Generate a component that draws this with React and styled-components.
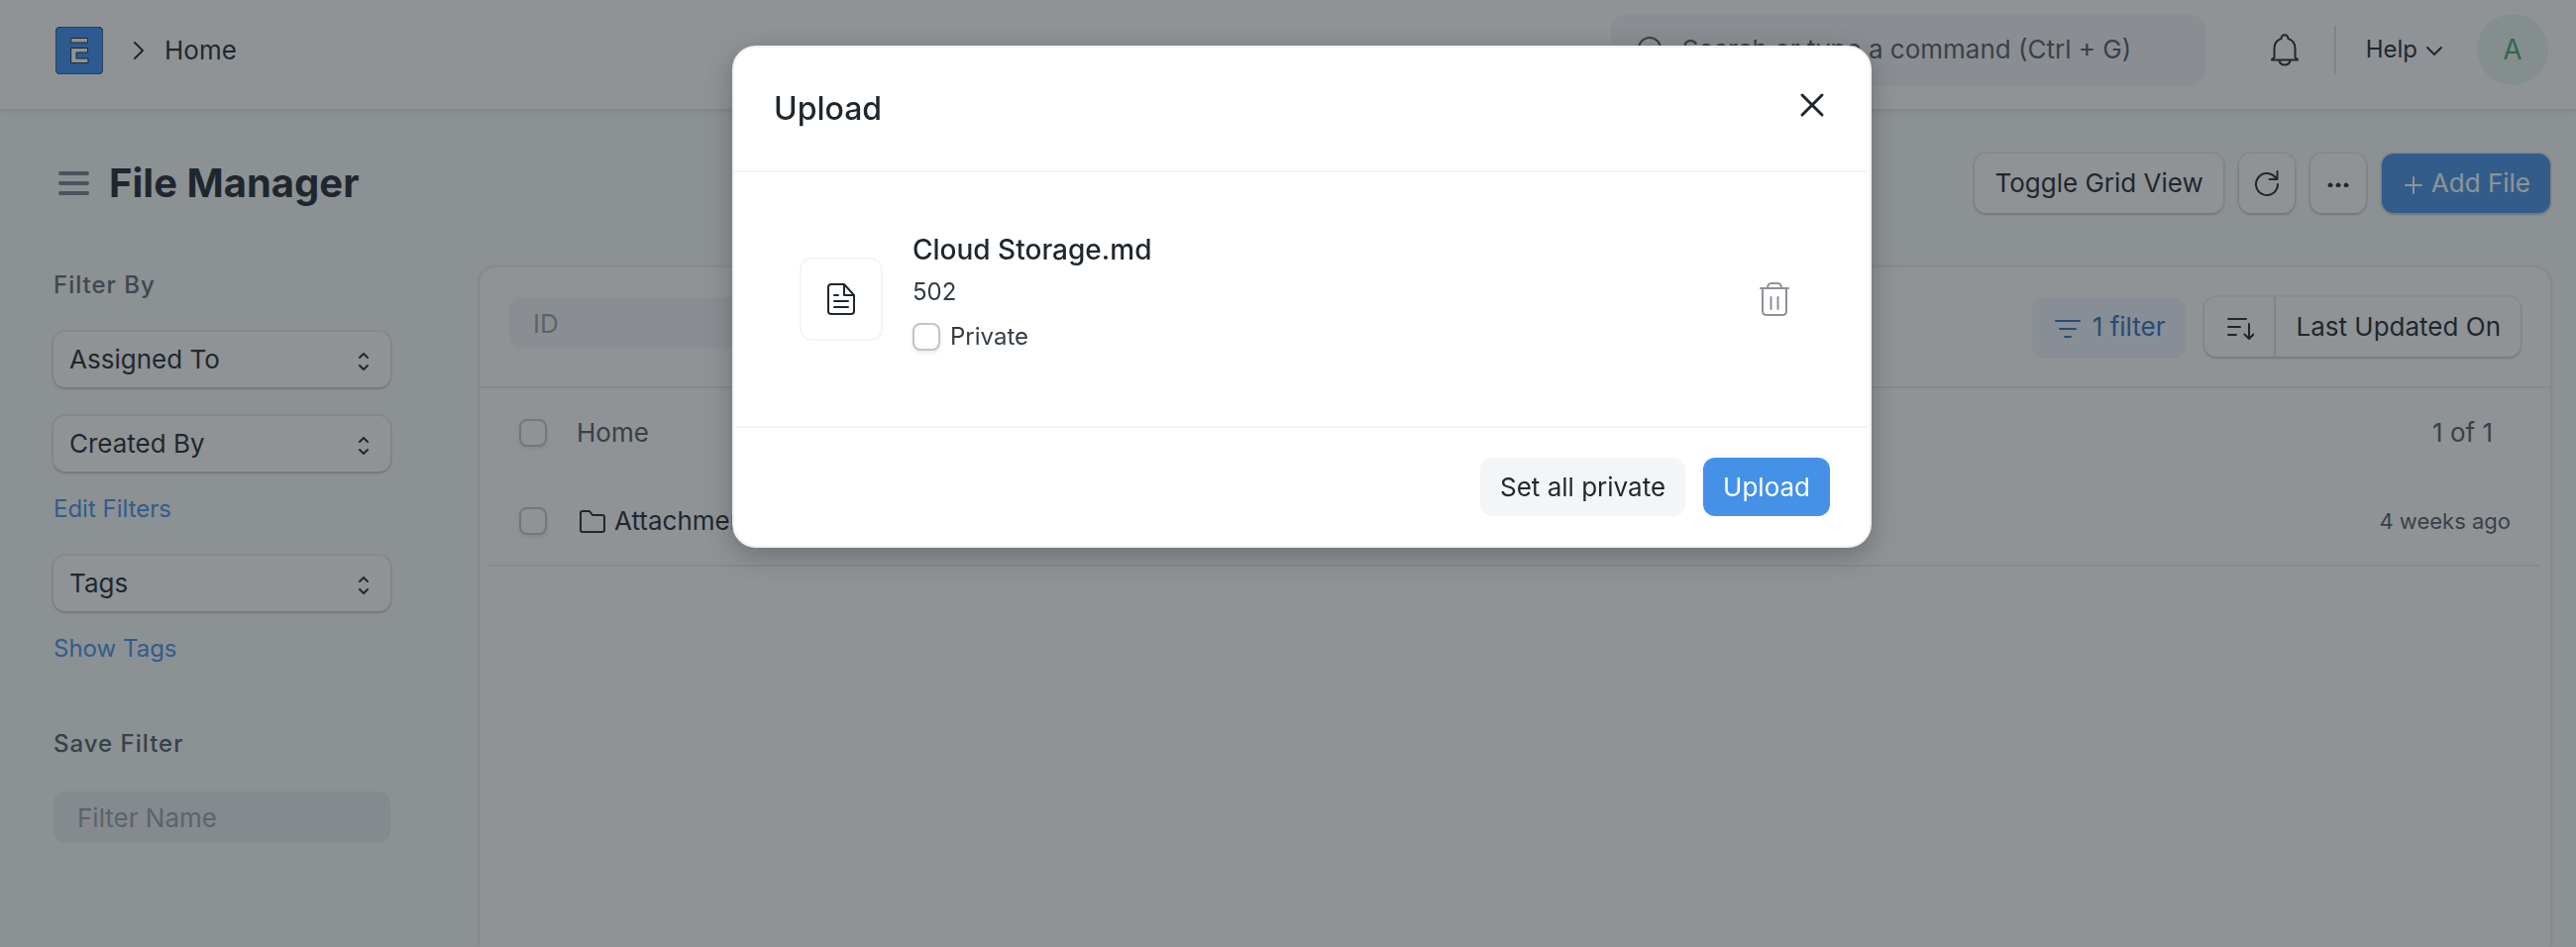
import React from "react";
import styled, { createGlobalStyle, css } from "styled-components";

const GlobalStyle = createGlobalStyle`
  * { box-sizing: border-box; }
  html, body, #root { height: 100%; }
  body {
    margin: 0;
    background: #f9fafa;
    color: #1f272e;
    font: 26px/40px Inter, sans-serif;
    overflow: hidden;
  }
  button, input, select { font: inherit; color: inherit; margin: 0; }
  h1, h2, h3, p { margin: 0; }
  svg { display: block; flex: none; fill: none; stroke: currentColor; stroke-linecap: round; stroke-linejoin: round; }
`;

const raised = css`
  border: 0;
  border-radius: 12px;
  background: #fff;
  box-shadow: 0 0 0 2px rgba(0, 0, 0, 0.06), 0 2px 3px rgba(25, 39, 52, 0.18);
`;

const Page = styled.div`
  height: 100%;
  display: flex;
  flex-direction: column;
  overflow: hidden;
`;

const Navbar = styled.header`
  height: 110px;
  flex: none;
  display: flex;
  align-items: flex-start;
  justify-content: space-between;
  padding: 14px 28px 0 56px;
  background: #fff;
  box-shadow: 0 2px 0 #e4e7ea, 0 4px 4px rgba(25, 39, 52, 0.06);
`;

const Breadcrumb = styled.nav`
  height: 74px;
  display: flex;
  align-items: center;
  a { color: inherit; text-decoration: none; }
  > svg { margin: 0 18px 0 28px; }
`;

const NavTools = styled.div`
  display: flex;
  align-items: center;
`;

const Search = styled.label`
  width: 600px;
  height: 72px;
  display: flex;
  align-items: center;
  gap: 18px;
  padding: 0 26px;
  margin-right: 60px;
  border-radius: 16px;
  background: #f4f5f6;
  color: #505a62;
  input {
    flex: 1;
    min-width: 0;
    border: 0;
    padding: 0;
    background: none;
    &::placeholder { color: #505a62; opacity: 1; }
  }
`;

const PlainButton = styled.button`
  border: 0;
  padding: 0;
  background: none;
  display: flex;
  align-items: center;
  gap: ${(p) => p.$gap || 0}px;
  font-size: 24px;
  color: ${(p) => p.$color || "#1f272e"};
`;

const NavDivider = styled.span`
  width: 2px;
  height: 48px;
  margin: 0 30px;
  background: #dce0e3;
`;

const Avatar = styled.span`
  width: 72px;
  height: 72px;
  margin-left: 34px;
  display: grid;
  place-items: center;
  border-radius: 50%;
  background: #eaf5ee;
  color: #48a868;
  font-size: 28px;
`;

const PageHead = styled.div`
  flex: none;
  display: flex;
  align-items: center;
  justify-content: space-between;
  padding: 45px 26px 0 58px;
`;

const TitleArea = styled.div`
  display: flex;
  align-items: center;
  gap: 20px;
  h1 { font-size: 40px; line-height: 60px; font-weight: 700; }
`;

const Actions = styled.div`
  display: flex;
  gap: 16px;
`;

const Button = styled.button`
  ${raised}
  height: ${(p) => p.$height || 60}px;
  min-width: 56px;
  padding: 0 ${(p) => (p.$icon ? 0 : 20)}px;
  display: flex;
  align-items: center;
  justify-content: center;
  gap: 6px;
  white-space: nowrap;
  ${(p) => p.$primary && css`background: #4491e7; color: #fff;`}
  ${(p) => p.$flat && css`box-shadow: none;`}
  ${(p) => p.$muted && css`background: #f4f5f6;`}
`;

const Body = styled.div`
  flex: 1;
  min-height: 0;
  display: flex;
  gap: 90px;
  padding: 55px 26px 0 54px;
`;

const Sidebar = styled.aside`
  width: 340px;
  flex: none;
  display: flex;
  flex-direction: column;
`;

const SideHeading = styled.h3`
  margin-top: ${(p) => p.$top || 0}px;
  font-size: 24px;
  line-height: 36px;
  font-weight: 500;
  letter-spacing: 1px;
  color: ${(p) => (p.$strong ? "#4c5a67" : "#5f6970")};
`;

const SelectWrap = styled.label`
  position: relative;
  display: block;
  margin-top: 29px;
  select {
    ${raised}
    appearance: none;
    display: block;
    width: 100%;
    height: 56px;
    padding: 0 16px;
  }
  svg { position: absolute; right: 22px; top: 20px; pointer-events: none; }
`;

const SideLink = styled.a`
  margin-top: 20px;
  font-size: 24px;
  line-height: 36px;
  color: #4491e7;
  text-decoration: none;
`;

const TextField = styled.input`
  width: ${(p) => p.$width || "100%"};
  height: 52px;
  margin-top: ${(p) => p.$top || 0}px;
  padding: 0 24px;
  border: 0;
  border-radius: 12px;
  background: ${(p) => p.$bg};
  &::placeholder { color: #98a1a9; opacity: 1; }
`;

const Card = styled.main`
  flex: 1;
  min-width: 0;
  background: #fff;
  border-radius: 16px 16px 0 0;
  box-shadow: 0 0 4px rgba(25, 39, 52, 0.2);
`;

const FilterBar = styled.div`
  height: 122px;
  display: flex;
  align-items: flex-start;
  justify-content: space-between;
  padding: 30px 30px 0;
  border-bottom: 2px solid #ebeef0;
`;

const FilterTools = styled.div`
  display: flex;
  gap: 20px;
`;

const FilterButton = styled.button`
  height: 60px;
  padding: 0 20px;
  display: flex;
  align-items: center;
  gap: 10px;
  border: 0;
  border-radius: 12px;
  background: #eff4fd;
  color: #2c70b8;
  box-shadow: 0 1px 2px rgba(25, 39, 52, 0.12);
`;

const SortGroup = styled.div`
  ${raised}
  height: 60px;
  display: flex;
  button {
    border: 0;
    background: none;
    padding: 0 20px;
    display: flex;
    align-items: center;
    & + button { border-left: 2px solid #dce0e3; }
  }
`;

const Row = styled.div`
  height: 90px;
  display: flex;
  align-items: center;
  margin: 0 10px;
  padding: 0 ${(p) => p.$right}px 0 30px;
  ${(p) => p.$line && css`border-bottom: 2px solid #ebeef0;`}
  color: ${(p) => (p.$line ? "#1f272e" : "#505a62")};
`;

const Checkbox = styled.input.attrs({ type: "checkbox" })`
  appearance: none;
  flex: none;
  width: 28px;
  height: 28px;
  border: 2px solid #c0c6cc;
  border-radius: 8px;
  background: #fff;
  box-shadow: 0 2px 4px rgba(0, 0, 0, 0.1);
`;

const RowName = styled.span`
  flex: 1;
  display: flex;
  align-items: center;
  gap: 8px;
  margin-left: 30px;
`;

const RowMeta = styled.span`
  font-size: ${(p) => p.$size}px;
  color: #505a62;
`;

const Backdrop = styled.div`
  position: fixed;
  inset: 0;
  display: flex;
  align-items: flex-start;
  justify-content: center;
  padding: 46px 0 46px 28px;
  background: rgba(31, 39, 46, 0.5);
`;

const Dialog = styled.section`
  width: 1150px;
  max-width: 100%;
  background: #fff;
  border: 2px solid #f0f1f2;
  border-radius: 24px;
  box-shadow: 0 8px 28px rgba(0, 0, 0, 0.24);
`;

const DialogHead = styled.header`
  height: 124px;
  display: flex;
  align-items: center;
  justify-content: space-between;
  padding: 0 40px;
  h2 { font-size: 32px; line-height: 48px; font-weight: 500; }
`;

const DialogBody = styled.div`
  min-height: 260px;
  display: flex;
  align-items: center;
  padding: 0 80px 0 66px;
  border-top: 2px solid #f4f5f6;
  border-bottom: 2px solid #f4f5f6;
`;

const FileTile = styled.div`
  width: 84px;
  height: 84px;
  flex: none;
  display: grid;
  place-items: center;
  border: 2px solid #f4f5f6;
  border-radius: 12px;
`;

const FileInfo = styled.div`
  flex: 1;
  margin-left: 30px;
  padding-bottom: 10px;
  font-size: 24px;
  line-height: 42px;
  color: #333c44;
  h3 { font-size: 28px; line-height: 44px; font-weight: 500; color: #1f272e; }
  label { display: flex; align-items: center; gap: 10px; line-height: 48px; }
`;

const DialogFoot = styled.footer`
  display: flex;
  justify-content: flex-end;
  gap: 18px;
  padding: 30px 40px;
`;

const Logo = () => (
  <svg width="48" height="48" viewBox="0 0 48 48" stroke="none">
    <rect width="48" height="48" rx="5" fill="#3b8ff5" />
    <path d="M16 11.5h16.5V16H16zM16 21.5h16.5V26H21v6h12v4.5H16z" fill="#fff" />
  </svg>
);

const Updown = () => (
  <svg width="10" height="20" viewBox="0 0 10 20" strokeWidth="2">
    <path d="M1 6l4-4 4 4M1 14l4 4 4-4" />
  </svg>
);

const SelectBox = ({ label }) => (
  <SelectWrap>
    <select aria-label={label}>
      <option>{label}</option>
    </select>
    <Updown />
  </SelectWrap>
);

export default function App() {
  return (
    <>
      <GlobalStyle />
      <Page>
        <Navbar>
          <Breadcrumb>
            <a href="#desk" aria-label="Desk"><Logo /></a>
            <svg width="16" height="20" viewBox="0 0 16 20" strokeWidth="2"><path d="M4 2l8 8-8 8" /></svg>
            <a href="#home">Home</a>
          </Breadcrumb>
          <NavTools>
            <Search>
              <svg width="28" height="28" viewBox="0 0 28 28" strokeWidth="2"><circle cx="13" cy="13" r="11" /><path d="M21 21l5 5" /></svg>
              <input placeholder="Search or type a command (Ctrl + G)" />
            </Search>
            <PlainButton aria-label="Notifications">
              <svg width="40" height="40" viewBox="0 0 40 40" strokeWidth="2">
                <path d="M7 30.5h26M7 30l2.500-2v-9c0-6 2.500-8.500 7-10 .5-5 6.500-5 7 0 4.500 1.500 7 4 7 10v9l2.500 2M14.500 31c1 6 10 6 11 0" />
              </svg>
            </PlainButton>
            <NavDivider />
            <PlainButton $gap={8}>
              Help
              <svg width="18" height="16" viewBox="0 0 18 16" strokeWidth="2"><path d="M2 6l7 7 7-7" /></svg>
            </PlainButton>
            <Avatar>A</Avatar>
          </NavTools>
        </Navbar>

        <PageHead>
          <TitleArea>
            <PlainButton aria-label="Toggle sidebar" $color="#74808b">
              <svg width="32" height="28" viewBox="0 0 32 28" strokeWidth="4"><path d="M3 4h27M3 14h27M3 24h27" /></svg>
            </PlainButton>
            <h1>File Manager</h1>
          </TitleArea>
          <Actions>
            <Button>Toggle Grid View</Button>
            <Button $icon aria-label="Refresh">
              <svg width="28" height="28" viewBox="0 0 28 28" strokeWidth="2"><path d="M25 15A11 11 0 1 1 22 7.500l2.500 2.500M24.500 2v8h-8" /></svg>
            </Button>
            <Button $icon aria-label="More">
              <svg width="22" height="8" viewBox="0 0 22 8" stroke="none"><g fill="#1f272e"><circle cx="3" cy="6" r="2" /><circle cx="11" cy="6" r="2" /><circle cx="19" cy="6" r="2" /></g></svg>
            </Button>
            <Button $primary>
              <svg width="24" height="24" viewBox="0 0 24 24" strokeWidth="2"><path d="M12 6v16M4 14h16" /></svg>
              Add File
            </Button>
          </Actions>
        </PageHead>

        <Body>
          <Sidebar>
            <SideHeading>Filter By</SideHeading>
            <SelectBox label="Assigned To" />
            <SelectBox label="Created By" />
            <SideLink href="#filters">Edit Filters</SideLink>
            <SelectBox label="Tags" />
            <SideLink href="#tags">Show Tags</SideLink>
            <SideHeading $strong $top={60}>Save Filter</SideHeading>
            <TextField placeholder="Filter Name" aria-label="Filter Name" $bg="#ebecf1" $top={30} />
          </Sidebar>
          <Card>
            <FilterBar>
              <TextField placeholder="ID" aria-label="ID" $width="320px" $bg="#f4f5f6" />
              <FilterTools>
                <FilterButton>
                  <svg width="30" height="28" viewBox="0 0 30 28" strokeWidth="2"><path d="M3 8h24M7 16h16M12 24h6" /></svg>
                  1 filter
                </FilterButton>
                <SortGroup>
                  <button aria-label="Sort direction">
                    <svg width="30" height="28" viewBox="0 0 30 28" strokeWidth="2"><path d="M4 6h18M4 14h12M4 22h8M25 11v15M20.500 21.500L25 26l4.500-4.500" /></svg>
                  </button>
                  <button>Last Updated On</button>
                </SortGroup>
              </FilterTools>
            </FilterBar>
            <Row $right={48}>
              <Checkbox aria-label="Select all" />
              <RowName>Home</RowName>
              <RowMeta $size={26}>1 of 1</RowMeta>
            </Row>
            <Row $right={30} $line>
              <Checkbox aria-label="Select Attachments" />
              <RowName>
                <svg width="30" height="28" viewBox="0 0 30 28" strokeWidth="2"><path d="M4 6q0-2 2-2h7l3 4h10q2 0 2 2v13q0 2-2 2H6q-2 0-2-2z" /></svg>
                Attachments
              </RowName>
              <RowMeta $size={22}>4 weeks ago</RowMeta>
            </Row>
          </Card>
        </Body>
      </Page>

      <Backdrop>
        <Dialog role="dialog" aria-label="Upload">
          <DialogHead>
            <h2>Upload</h2>
            <PlainButton aria-label="Close">
              <svg width="36" height="36" viewBox="0 0 36 36" strokeWidth="3"><path d="M8 4l20 20M28 4L8 24" /></svg>
            </PlainButton>
          </DialogHead>
          <DialogBody>
            <FileTile>
              <svg width="32" height="36" viewBox="0 0 32 36" strokeWidth="2"><path d="M19 3H6q-3 0-3 3v24q0 3 3 3h20q3 0 3-3V14zM19 3v11h10M9 14h4M9 20h14M9 26h14" /></svg>
            </FileTile>
            <FileInfo>
              <h3>Cloud Storage.md</h3>
              <p>502</p>
              <label><Checkbox />Private</label>
            </FileInfo>
            <PlainButton aria-label="Remove file" $color="#8d9297">
              <svg width="32" height="36" viewBox="0 0 32 36" strokeWidth="2"><path d="M2 7h28M4 7v23q0 4 4 4h16q4 0 4-4V7M9 7q0-5 4-5h6q4 0 4 5M12.500 16v12M19.500 16v12" /></svg>
            </PlainButton>
          </DialogBody>
          <DialogFoot>
            <Button $flat $muted $height={59}>Set all private</Button>
            <Button $flat $primary $height={59}>Upload</Button>
          </DialogFoot>
        </Dialog>
      </Backdrop>
    </>
  );
}
